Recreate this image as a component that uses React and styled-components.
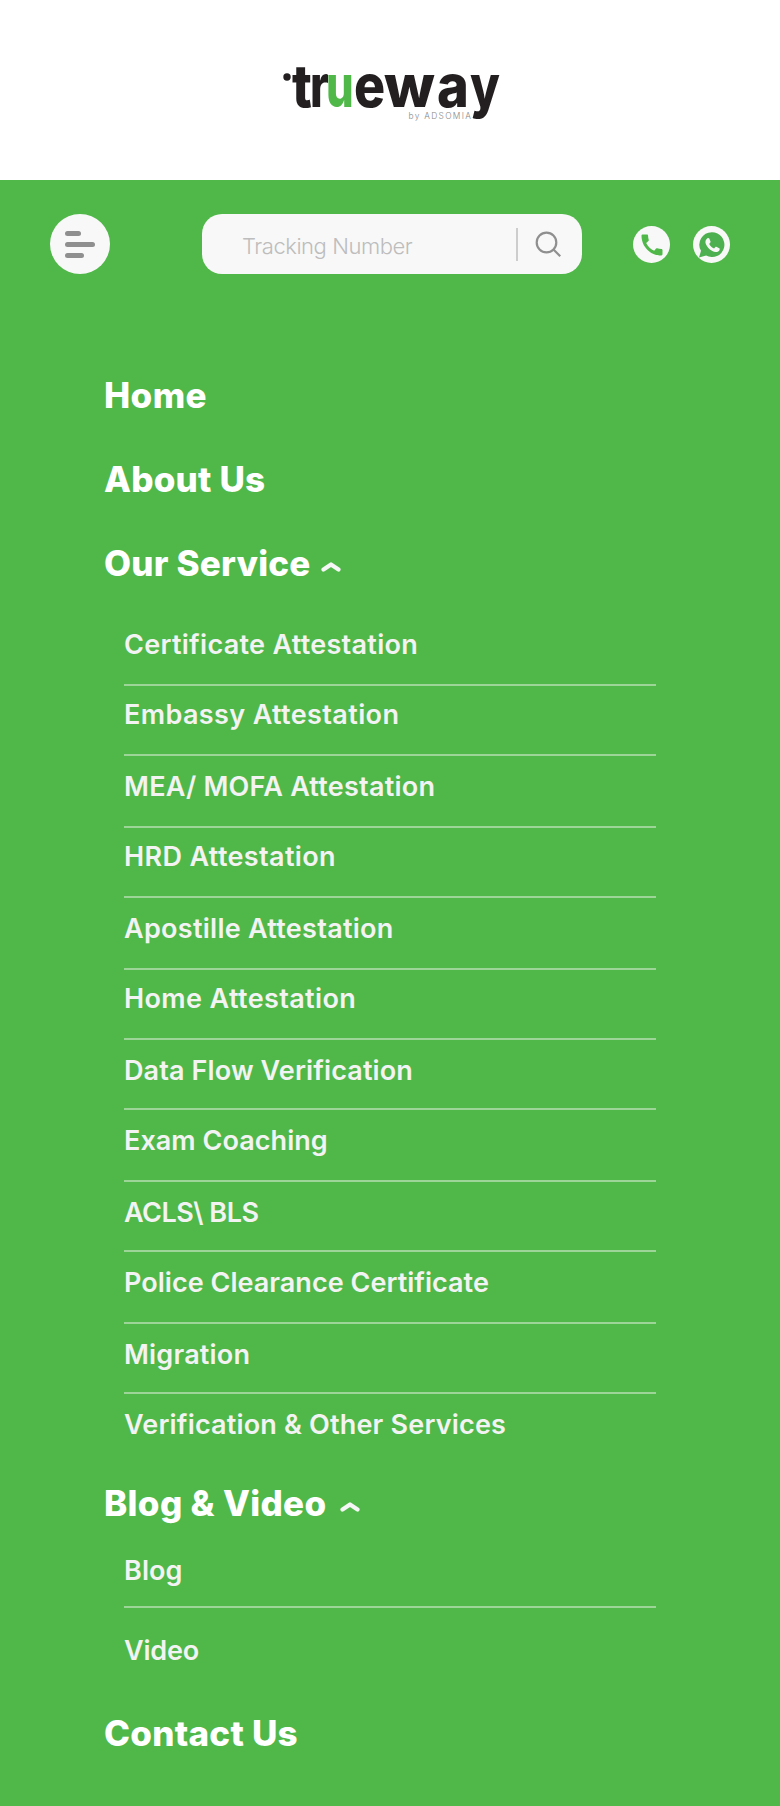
import React from "react";
import styled, { createGlobalStyle } from "styled-components";
import { MdCall } from "react-icons/md";

const green = "#4fb848";

const GlobalStyle = createGlobalStyle`
  *, *::before, *::after { box-sizing: border-box; }
  body { margin: 0; background: ${green}; font-family: Inter, "Liberation Sans", sans-serif; }
`;

const Page = styled.div`
  width: 780px;
  min-height: 1806px;
  background: ${green};
`;

const Header = styled.header`
  height: 180px;
  background: #fff;
  display: flex;
  justify-content: center;
  padding-top: 50px;
`;

const Toolbar = styled.div`
  display: flex;
  align-items: center;
  height: 60px;
  margin-top: 34px;
  padding-left: 50px;
`;

const MenuButton = styled.button`
  width: 60px;
  height: 60px;
  margin-right: 92px;
  padding: 0 0 0 15px;
  border: 0;
  border-radius: 50%;
  background: #f8f8f8;
  display: flex;
  flex-direction: column;
  justify-content: center;
  gap: 6px;
`;

const Bar = styled.span`
  width: ${(p) => p.$w}px;
  height: 5px;
  border-radius: 2.5px;
  background: #8f8f8f;
`;

const Search = styled.label`
  display: flex;
  align-items: center;
  width: 380px;
  height: 60px;
  padding-left: 40px;
  border-radius: 20px;
  background: #f8f8f8;
`;

const Placeholder = styled.span`
  width: 274px;
  padding-top: 4px;
  font-size: 22px;
  font-weight: 300;
  line-height: 28px;
  letter-spacing: -0.45px;
  color: #bdbdbd;
`;

const Divider = styled.span`
  width: 2px;
  height: 33px;
  margin-right: 17px;
  background: #cdcdcd;
`;

const RoundButton = styled.button`
  display: flex;
  align-items: center;
  justify-content: center;
  width: 37px;
  height: 37px;
  margin: 1px 0 0 ${(p) => p.$gap}px;
  padding: 0;
  border: 0;
  border-radius: 50%;
  background: #f8f8f8;
  color: ${(p) => p.$color};
`;

const Nav = styled.nav`
  padding: 80px 124px 0 104px;
`;

const Heading = styled.div`
  display: flex;
  align-items: center;
  height: 84px;
  font-size: 35px;
  font-weight: 800;
  line-height: 80px;
  padding-bottom: 2px;
  letter-spacing: ${(p) => p.$tracking}px;
  white-space: nowrap;
  color: #fff;
`;

const Label = styled.span`
  width: ${(p) => p.$w}px;
  flex: none;
`;

const Chevron = styled.svg`
  margin-top: 8px;
  flex: none;
`;

const Submenu = styled.div`
  padding-left: 20px;
`;

const Item = styled.div`
  height: ${(p) => p.$h}px;
  padding-top: ${(p) => p.$lead}px;
  border-bottom: ${(p) => (p.$last ? "0" : "2px solid #9dd599")};
  font-size: 27px;
  font-weight: 600;
  line-height: 42px;
  letter-spacing: ${(p) => p.$tracking}px;
  white-space: nowrap;
  color: #f3f3f3;
`;

const services = [
  ["Certificate Attestation", 80, 18, 0.29],
  ["Embassy Attestation", 70, 8, 0.38],
  ["MEA/ MOFA Attestation", 72, 10, 0.23],
  ["HRD Attestation", 70, 8, 0.36],
  ["Apostille Attestation", 72, 10, 0.28],
  ["Home Attestation", 70, 8, 0.38],
  ["Data Flow Verification", 70, 10, 0.12],
  ["Exam Coaching", 72, 10, 0.05],
  ["ACLS\\ BLS", 70, 10, -0.5],
  ["Police Clearance Certificate", 72, 10, 0.03],
  ["Migration", 70, 10, 0.2],
  ["Verification & Other Services", 68, 10, 0.18],
];

const media = [
  ["Blog", 62, 4, 0.1],
  ["Video", 84, 22, -0.2],
];

function Items({ list }) {
  return (
    <Submenu>
      {list.map(([label, h, lead, tracking], i) => (
        <Item key={label} $h={h} $lead={lead} $tracking={tracking} $last={i === list.length - 1}>
          {label}
        </Item>
      ))}
    </Submenu>
  );
}

function Up() {
  return (
    <Chevron width="20" height="12" viewBox="0 0 20 12" fill="none">
      <path d="M2.5 8.5 10 3.5 17.5 8.5" stroke="#f6f6f6" strokeWidth="4.2" strokeLinecap="round" strokeLinejoin="round" />
    </Chevron>
  );
}

const wordmark = [
  ["t", 22, 0.88],
  ["r", 40, 0.76],
  ["u", 56, 0.74, green],
  ["e", 84, 0.88],
  ["w", 114, 1],
  ["a", 167, 0.92],
  ["y", 200, 0.82],
];

function Logo() {
  return (
    <svg width="240" height="80" viewBox="0 0 240 80" role="img" aria-label="trueway by ADSOMIA">
      <circle cx="17" cy="27" r="3.7" fill="#231f20" />
      <g fontFamily="Inter" fontSize="59" fontWeight="800" fill="#231f20">
        {wordmark.map(([letter, x, stretch, fill]) => (
          <text key={letter} transform={`translate(${x} 56.5) scale(${stretch} 1)`} fill={fill}>
            {letter}
          </text>
        ))}
      </g>
      <text x="138.5" y="68.8" fontFamily="Inter" fontSize="8.4" fontWeight="300" letterSpacing="1.3" fill="#888">by ADSOMIA</text>
    </svg>
  );
}

function WhatsApp() {
  return (
    <svg width="27" height="26" viewBox="0 0 27 26">
      <path d="M14 0.3a12.4 12.4 0 1 1-5.9 23.3L1 25.6l2-6.8A12.4 12.4 0 0 1 14 .3Z" fill="currentColor" />
      <path
        d="M9.4 6.2c.7-.5 1.5-.4 1.9.4l1.2 2.9c.2.6-.1 1-1.3 2.4 1.2 2.1 2.7 3.5 4.9 4.5 1.2-1.6 1.6-1.9 2.2-1.6l2.9 1.4c.7.4.6 1 .3 1.8-.6 1.5-2.2 2.2-3.7 2.1-4.7-.5-9.2-4.8-10.3-9-.4-2 .5-3.9 1.9-4.9Z"
        fill="#f8f8f8"
      />
    </svg>
  );
}

export default function App() {
  return (
    <Page>
      <GlobalStyle />
      <Header>
        <Logo />
      </Header>
      <Toolbar>
        <MenuButton aria-label="Menu">
          <Bar $w={16} />
          <Bar $w={30} />
          <Bar $w={19} />
        </MenuButton>
        <Search>
          <Placeholder>Tracking Number</Placeholder>
          <Divider />
          <svg width="28" height="28" viewBox="0 0 28 28" fill="none" stroke="#8f8f8f" strokeWidth="2.2">
            <circle cx="11.5" cy="12.5" r="9.8" />
            <path d="M18.5 19.5 25.2 26.2" />
          </svg>
        </Search>
        <RoundButton $gap={51} $color={green} aria-label="Call">
          <MdCall size={28} />
        </RoundButton>
        <RoundButton $gap={23} $color="#4caf50" aria-label="WhatsApp">
          <WhatsApp />
        </RoundButton>
      </Toolbar>
      <Nav>
        <Heading $tracking={0.4}>Home</Heading>
        <Heading $tracking={0.2}>About Us</Heading>
        <Heading $tracking={0.2}>
          <Label $w={217}>Our Service</Label>
          <Up />
        </Heading>
        <Items list={services} />
        <Heading $tracking={0.35}>
          <Label $w={236}>Blog &amp; Video</Label>
          <Up />
        </Heading>
        <Items list={media} />
        <Heading $tracking={0.25}>Contact Us</Heading>
      </Nav>
    </Page>
  );
}
